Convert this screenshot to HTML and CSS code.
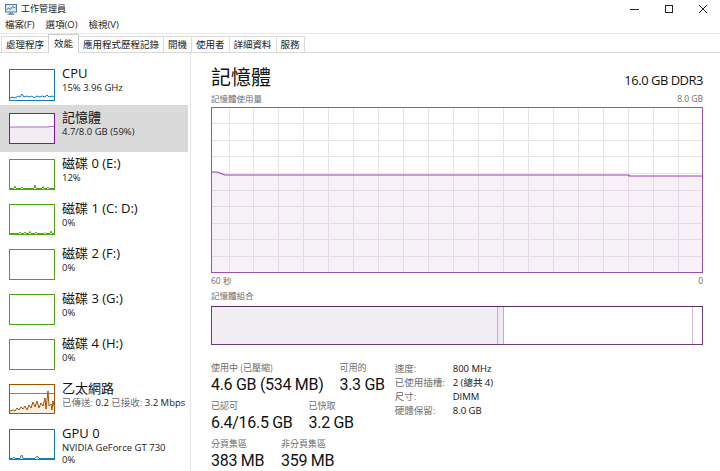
FILE: index.html
```html
<!DOCTYPE html>
<html lang="zh-Hant">
<head>
<meta charset="utf-8">
<title>工作管理員</title>
<link rel="stylesheet" href="styles.css">
</head>
<body>
<div class="window">
  <div class="titlebar">
    <svg class="app-icon" width="12" height="11" viewBox="0 0 12 11">
      <rect x="0.5" y="0.5" width="11" height="7.5" fill="#dbe9f5" stroke="#5a7a99"/>
      <polyline points="1.5,6 3.5,4 5.5,5.5 7.5,2.5 10.5,4" fill="none" stroke="#2b7cc4" stroke-width="1"/>
      <rect x="4" y="8.5" width="4" height="1.2" fill="#5a7a99"/>
      <rect x="2.5" y="9.8" width="7" height="1" fill="#5a7a99"/>
    </svg>
    <span class="title-text">工作管理員</span>
    <div class="controls">
      <span class="ctl"><svg width="10" height="10" viewBox="0 0 10 10"><line x1="0" y1="5.5" x2="9" y2="5.5" stroke="#222" stroke-width="1"/></svg></span>
      <span class="ctl"><svg width="10" height="10" viewBox="0 0 10 10"><rect x="1.5" y="1.5" width="7" height="7" fill="none" stroke="#222" stroke-width="1"/></svg></span>
      <span class="ctl"><svg width="10" height="10" viewBox="0 0 10 10"><path d="M1 1 L9 9 M9 1 L1 9" stroke="#222" stroke-width="1"/></svg></span>
    </div>
  </div>
  <div class="menubar">
    <span>檔案(F)</span><span>選項(O)</span><span>檢視(V)</span>
  </div>
  <div class="tabs">
    <span class="tab">處理程序</span>
    <span class="tab active">效能</span>
    <span class="tab">應用程式歷程記錄</span>
    <span class="tab">開機</span>
    <span class="tab">使用者</span>
    <span class="tab">詳細資料</span>
    <span class="tab">服務</span>
  </div>
  <div class="content">
    <aside class="sidebar">
      <div class="item">
        <svg class="thumb cpu" width="46" height="32" viewBox="0 0 46 32">
          <rect x="0.5" y="0.5" width="45" height="31" fill="#fff" stroke="#117dbb"/>
          <polyline points="1,29 4,28 6,29 9,27 11,28 13,25 15,28 18,27 20,28 23,27 25,29 28,27 31,28 33,27 36,28 38,26 40,28 43,27 45,28" fill="none" stroke="#117dbb" stroke-width="1"/>
        </svg>
        <div class="item-text"><div class="item-name">CPU</div><div class="item-sub">15% 3.96 GHz</div></div>
      </div>
      <div class="item selected">
        <svg class="thumb" width="46" height="31" viewBox="0 0 46 31">
          <rect x="0.5" y="0.5" width="45" height="30" fill="#fff" stroke="#8b12ae"/>
          <rect x="1" y="14" width="44" height="16" fill="#f1edf2"/>
          <polyline points="1,14 40,14 40,13.5 45,13.5" fill="none" stroke="#b06ac6" stroke-width="1"/>
        </svg>
        <div class="item-text"><div class="item-name">記憶體</div><div class="item-sub">4.7/8.0 GB (59%)</div></div>
      </div>
      <div class="item">
        <svg class="thumb" width="46" height="31" viewBox="0 0 46 31">
          <rect x="0.5" y="0.5" width="45" height="30" fill="#fff" stroke="#4da60c"/>
          <polyline points="1,29.5 5,29.5 6,27 7,29.5 12,29.5 13,28 14,29.5 25,29.5 26,26 27,29.5 33,29.5 34,27.5 35,29.5 38,29.5 39,28 40,29.5 45,29.5" fill="none" stroke="#4da60c" stroke-width="1"/>
        </svg>
        <div class="item-text"><div class="item-name">磁碟 0 (E:)</div><div class="item-sub">12%</div></div>
      </div>
      <div class="item">
        <svg class="thumb" width="46" height="31" viewBox="0 0 46 31">
          <rect x="0.5" y="0.5" width="45" height="30" fill="#fff" stroke="#4da60c"/>
          <polyline points="1,29.5 10,29.5 11,28 12,29.5 15,29.5 16,28 17,29.5 20,29.5 21,27.5 22,29.5 26,29.5 27,28 28,29.5 35,29.5 36,28.5 37,29.5 41,29.5 42,27 43,29.5 45,29.5" fill="none" stroke="#4da60c" stroke-width="1"/>
        </svg>
        <div class="item-text"><div class="item-name">磁碟 1 (C: D:)</div><div class="item-sub">0%</div></div>
      </div>
      <div class="item">
        <svg class="thumb" width="46" height="31" viewBox="0 0 46 31">
          <rect x="0.5" y="0.5" width="45" height="30" fill="#fff" stroke="#4da60c"/>
        </svg>
        <div class="item-text"><div class="item-name">磁碟 2 (F:)</div><div class="item-sub">0%</div></div>
      </div>
      <div class="item">
        <svg class="thumb" width="46" height="31" viewBox="0 0 46 31">
          <rect x="0.5" y="0.5" width="45" height="30" fill="#fff" stroke="#4da60c"/>
        </svg>
        <div class="item-text"><div class="item-name">磁碟 3 (G:)</div><div class="item-sub">0%</div></div>
      </div>
      <div class="item">
        <svg class="thumb" width="46" height="31" viewBox="0 0 46 31">
          <rect x="0.5" y="0.5" width="45" height="30" fill="#fff" stroke="#4da60c"/>
        </svg>
        <div class="item-text"><div class="item-name">磁碟 4 (H:)</div><div class="item-sub">0%</div></div>
      </div>
      <div class="item">
        <svg class="thumb" width="46" height="30" viewBox="0 0 46 30">
          <rect x="0.5" y="0.5" width="45" height="29" fill="#fff" stroke="#a74f01"/>
          <line x1="1" y1="9.5" x2="45" y2="9.5" stroke="#a74f01" stroke-width="0.8"/>
          <polygon points="1,29 1,27 4,26 6,27 8,24 10,26 12,23 14,25 16,22 18,26 20,21 22,24 24,18 26,23 28,17 30,24 32,19 34,22 36,14 37,25 39,7 40,22 42,20 43,26 44,17 45,22 45,29" fill="#fbefe4"/>
          <polyline points="1,27 4,26 6,27 8,24 10,26 12,23 14,25 16,22 18,26 20,21 22,24 24,18 26,23 28,17 30,24 32,19 34,22 36,14 37,25 39,7 40,22 42,20 43,26 44,17 45,22" fill="none" stroke="#a74f01" stroke-width="1"/>
        </svg>
        <div class="item-text"><div class="item-name">乙太網路</div><div class="item-sub"><span class="muted">已傳送:</span> 0.2 <span class="muted">已接收:</span> 3.2 Mbps</div></div>
      </div>
      <div class="item">
        <svg class="thumb" width="46" height="31" viewBox="0 0 46 31">
          <rect x="0.5" y="0.5" width="45" height="30" fill="#fff" stroke="#117dbb"/>
          <polyline points="1,29.5 4,29.5 5,28 6,29.5 11,29.5 12,27 13,26 14,29.5 26,29.5 27,28 29,27.5 30,29.5 45,29.5" fill="none" stroke="#117dbb" stroke-width="1"/>
        </svg>
        <div class="item-text"><div class="item-name">GPU 0</div><div class="item-sub">NVIDIA GeForce GT 730</div><div class="item-sub">0%</div></div>
      </div>
    </aside>
    <main class="main">
      <div class="heading">
        <h1 class="heading-title">記憶體</h1>
        <span class="heading-spec">16.0 GB DDR3</span>
      </div>
      <div class="caption-row"><span>記憶體使用量</span><span>8.0 GB</span></div>
      <svg class="usage-graph" width="492" height="166" viewBox="0 0 492 166">
        <rect x="0" y="0" width="492" height="166" fill="#fff"/>
        <g stroke="#e9e2eb" stroke-width="1">
          <line x1="18.5" y1="0" x2="18.5" y2="166"/><line x1="42.5" y1="0" x2="42.5" y2="166"/><line x1="67.5" y1="0" x2="67.5" y2="166"/><line x1="92.5" y1="0" x2="92.5" y2="166"/><line x1="117.5" y1="0" x2="117.5" y2="166"/><line x1="142.5" y1="0" x2="142.5" y2="166"/><line x1="167.5" y1="0" x2="167.5" y2="166"/><line x1="192.5" y1="0" x2="192.5" y2="166"/><line x1="217.5" y1="0" x2="217.5" y2="166"/><line x1="242.5" y1="0" x2="242.5" y2="166"/><line x1="267.5" y1="0" x2="267.5" y2="166"/><line x1="292.5" y1="0" x2="292.5" y2="166"/><line x1="317.5" y1="0" x2="317.5" y2="166"/><line x1="342.5" y1="0" x2="342.5" y2="166"/><line x1="367.5" y1="0" x2="367.5" y2="166"/><line x1="392.5" y1="0" x2="392.5" y2="166"/><line x1="417.5" y1="0" x2="417.5" y2="166"/><line x1="442.5" y1="0" x2="442.5" y2="166"/><line x1="467.5" y1="0" x2="467.5" y2="166"/>
          <line x1="0" y1="16.5" x2="492" y2="16.5"/><line x1="0" y1="33.5" x2="492" y2="33.5"/><line x1="0" y1="49.5" x2="492" y2="49.5"/><line x1="0" y1="66.5" x2="492" y2="66.5"/><line x1="0" y1="83.5" x2="492" y2="83.5"/><line x1="0" y1="99.5" x2="492" y2="99.5"/><line x1="0" y1="116.5" x2="492" y2="116.5"/><line x1="0" y1="132.5" x2="492" y2="132.5"/><line x1="0" y1="149.5" x2="492" y2="149.5"/>
        </g>
        <polygon points="0,65 6,65 14,68 418,68 418,69 492,69 492,166 0,166" fill="#f3eff4" fill-opacity="0.85"/>
        <g stroke="#e4dae7" stroke-width="1">
          <line x1="18.5" y1="69" x2="18.5" y2="166"/><line x1="42.5" y1="69" x2="42.5" y2="166"/><line x1="67.5" y1="69" x2="67.5" y2="166"/><line x1="92.5" y1="69" x2="92.5" y2="166"/><line x1="117.5" y1="69" x2="117.5" y2="166"/><line x1="142.5" y1="69" x2="142.5" y2="166"/><line x1="167.5" y1="69" x2="167.5" y2="166"/><line x1="192.5" y1="69" x2="192.5" y2="166"/><line x1="217.5" y1="69" x2="217.5" y2="166"/><line x1="242.5" y1="69" x2="242.5" y2="166"/><line x1="267.5" y1="69" x2="267.5" y2="166"/><line x1="292.5" y1="69" x2="292.5" y2="166"/><line x1="317.5" y1="69" x2="317.5" y2="166"/><line x1="342.5" y1="69" x2="342.5" y2="166"/><line x1="367.5" y1="69" x2="367.5" y2="166"/><line x1="392.5" y1="69" x2="392.5" y2="166"/><line x1="417.5" y1="69" x2="417.5" y2="166"/><line x1="442.5" y1="69" x2="442.5" y2="166"/><line x1="467.5" y1="69" x2="467.5" y2="166"/>
          <line x1="0" y1="83.5" x2="492" y2="83.5"/><line x1="0" y1="99.5" x2="492" y2="99.5"/><line x1="0" y1="116.5" x2="492" y2="116.5"/><line x1="0" y1="132.5" x2="492" y2="132.5"/><line x1="0" y1="149.5" x2="492" y2="149.5"/>
        </g>
        <polyline points="0,65 6,65 14,68 418,68 418,69 492,69" fill="none" stroke="#9a3fb5" stroke-width="1.2"/>
        <rect x="0.5" y="0.5" width="491" height="165" fill="none" stroke="#9b4fb8" stroke-width="1"/>
      </svg>
      <div class="caption-row axis"><span>60 秒</span><span>0</span></div>
      <div class="caption-row comp-label"><span>記憶體組合</span></div>
      <div class="composition">
        <div class="seg in-use"></div>
        <div class="seg modified"></div>
        <div class="seg standby"></div>
        <div class="seg free"></div>
      </div>
      <div class="stats">
        <div class="stat-groups">
          <div class="stat-row">
            <div class="stat"><div class="stat-label">使用中 (已壓縮)</div><div class="stat-value">4.6 GB (534 MB)</div></div>
            <div class="stat"><div class="stat-label">可用的</div><div class="stat-value">3.3 GB</div></div>
          </div>
          <div class="stat-row">
            <div class="stat"><div class="stat-label">已認可</div><div class="stat-value">6.4/16.5 GB</div></div>
            <div class="stat"><div class="stat-label">已快取</div><div class="stat-value">3.2 GB</div></div>
          </div>
          <div class="stat-row">
            <div class="stat"><div class="stat-label">分頁集區</div><div class="stat-value">383 MB</div></div>
            <div class="stat"><div class="stat-label">非分頁集區</div><div class="stat-value">359 MB</div></div>
          </div>
        </div>
        <dl class="info">
          <dt>速度:</dt><dd>800 MHz</dd>
          <dt>已使用插槽:</dt><dd>2 (總共 4)</dd>
          <dt>尺寸:</dt><dd>DIMM</dd>
          <dt>硬體保留:</dt><dd>8.0 GB</dd>
        </dl>
      </div>
    </main>
  </div>
</div>
</body>
</html>
```

FILE: styles.css
```css
html, body {
  margin: 0;
  padding: 0;
  background: #fff;
}
body {
  width: 720px;
  height: 471px;
  overflow: hidden;
  font-family: "Open Sans", "Noto Sans CJK TC", sans-serif;
  color: #111;
}
.window {
  display: flex;
  flex-direction: column;
  height: 471px;
}
.titlebar {
  height: 17px;
  display: flex;
  align-items: center;
}
.app-icon {
  margin-left: 5px;
  margin-top: 1px;
}
.title-text {
  margin-left: 4px;
  font-size: 9px;
  line-height: 12px;
  color: #222;
}
.controls {
  margin-left: auto;
  display: flex;
  height: 17px;
}
.ctl {
  width: 34px;
  display: flex;
  align-items: center;
  justify-content: center;
}
.menubar {
  height: 16px;
  display: flex;
  align-items: center;
  gap: 11px;
  padding-left: 5px;
  font-size: 9.5px;
  line-height: 12px;
  color: #222;
}
.tabs {
  height: 18px;
  border-top: 1px solid #e6e6e6;
  border-bottom: 1px solid #d9d9d9;
  display: flex;
  align-items: flex-end;
  padding-left: 1px;
  font-size: 9.5px;
  color: #222;
}
.tab {
  height: 16px;
  line-height: 15px;
  padding: 0 4px;
  border: 1px solid #dcdcdc;
  border-bottom: none;
  border-left: none;
  box-sizing: border-box;
  background: #fff;
}
.tab:first-child {
  border-left: 1px solid #dcdcdc;
}
.tab.active {
  height: 19px;
  margin-bottom: -1px;
  padding: 1px 5px 0;
  border-left: 1px solid #d0d0d0;
  border-right: 1px solid #d0d0d0;
  border-top: 1px solid #d0d0d0;
  margin-left: -1px;
  position: relative;
}
.content {
  display: flex;
  flex: 1;
  min-height: 0;
}
.sidebar {
  width: 190px;
  border-right: 1px solid #e4e4e4;
  padding-top: 7px;
  box-sizing: content-box;
}
.item {
  width: 188px;
  height: 45px;
  box-sizing: border-box;
  padding: 9px 0 0 9px;
  display: flex;
  align-items: flex-start;
}
.item.selected {
  background: #dadada;
  padding-top: 8px;
  height: 47px;
  margin-bottom: -2px;
}
.thumb {
  flex: none;
  display: block;
}
.item-text {
  margin-left: 7px;
  margin-top: -4px;
}
.item-name {
  font-size: 13px;
  line-height: 17px;
  color: #111;
}
.item-sub {
  font-size: 9.5px;
  line-height: 12px;
  color: #222;
}
.muted {
  color: #6d6d6d;
}
.main {
  flex: 1;
  padding: 13px 17px 0 20px;
  min-width: 0;
}
.heading {
  display: flex;
  justify-content: space-between;
  align-items: baseline;
  height: 27px;
}
.heading-title {
  margin: 0;
  font-weight: normal;
  font-size: 20px;
  line-height: 24px;
  color: #111;
}
.heading-spec {
  font-size: 13px;
  letter-spacing: -0.5px;
  color: #111;
}
.caption-row {
  display: flex;
  justify-content: space-between;
  font-size: 8.5px;
  line-height: 11px;
  color: #6d6d6d;
  height: 14px;
}
.usage-graph {
  display: block;
}
.caption-row.axis {
  margin-top: 2px;
  height: 12px;
}
.caption-row.comp-label {
  height: 16px;
  margin-top: 3px;
}
.composition {
  display: flex;
  height: 39px;
  box-sizing: border-box;
  border: 1.5px solid #6e3a80;
  border-top-color: #5c2a6c;
}
.seg {
  height: 100%;
}
.seg.in-use {
  width: 285px;
  background: #f1eff2;
}
.seg.modified {
  width: 5px;
  background: #f2e8f5;
  border-left: 1px solid #c8a8d2;
  border-right: 1px solid #c8a8d2;
}
.seg.standby {
  flex: 1;
  background: #fff;
  border-right: 1px solid #d2bcd9;
}
.seg.free {
  width: 9px;
  background: #fff;
}
.stats {
  display: flex;
  margin-top: 16px;
}
.stat-groups {
  display: flex;
  flex-direction: column;
  gap: 5.5px;
}
.stat-row {
  display: flex;
  gap: 16px;
}
.stat-row:last-child {
  gap: 17px;
}
.stat-label {
  font-family: "Noto Sans CJK TC", sans-serif;
  font-size: 9px;
  line-height: 13.5px;
  color: #6d6d6d;
}
.stat-value {
  font-family: Roboto, "Open Sans", sans-serif;
  font-size: 16px;
  line-height: 19px;
  letter-spacing: -0.3px;
  color: #111;
}
.info {
  margin: 2px 0 0 10px;
  display: grid;
  grid-template-columns: 58px auto;
  grid-auto-rows: 14px;
  align-content: start;
  font-size: 9.5px;
  line-height: 12px;
}
.info dt {
  color: #6d6d6d;
}
.info dd {
  margin: 0;
  color: #111;
}
```
